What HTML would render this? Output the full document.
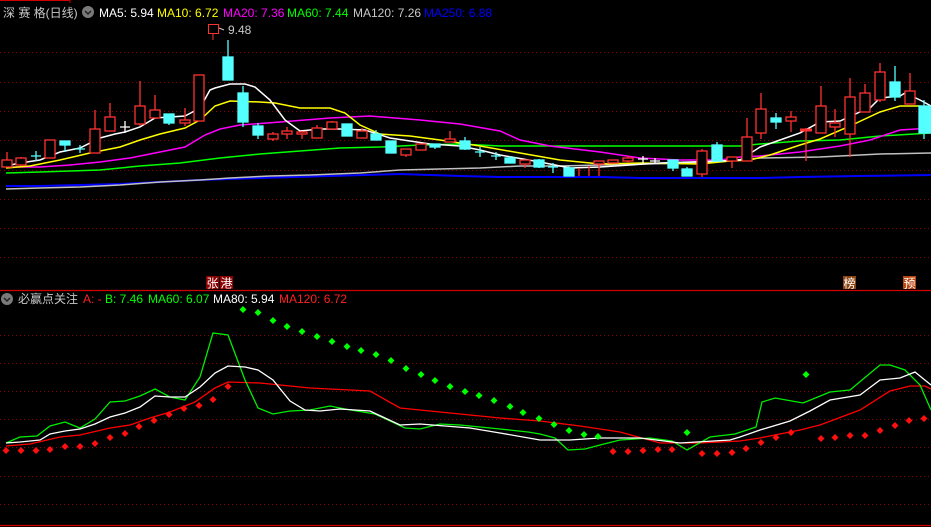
<!DOCTYPE html>
<html><head><meta charset="utf-8"><style>
html,body{margin:0;padding:0;background:#000;width:931px;height:527px;overflow:hidden}
svg{display:block}
text{font-family:"Liberation Sans","Noto Sans CJK SC",sans-serif;font-size:12px}
</style></head><body>
<svg width="931" height="527" viewBox="0 0 931 527" xmlns="http://www.w3.org/2000/svg">
<rect width="931" height="527" fill="#000"/>
<path d="M0 0.5H70V3" stroke="#c00" fill="none"/>
<!-- grids -->
<g stroke="#8b0000" stroke-dasharray="1 3" stroke-width="1">
<path d="M0 52.5H931M0 82.5H931M0 111.5H931M0 140.5H931M0 170.5H931M0 199.5H931M0 228.5H931M0 257.5H931"/>
<path d="M0 335.5H931M0 363.5H931M0 391.5H931M0 419.5H931M0 447.5H931M0 476.5H931M0 504.5H931"/>
</g>
<path d="M0 290.5H931M0 525.5H931" stroke="#d00000" stroke-width="1.2"/>
<!-- header -->
<text x="3" y="17" fill="#c8c8c8" font-size="13">深 赛 格(日线)</text>
<circle cx="88" cy="12" r="6" fill="#7a7a7a"/><path d="M85 11l3 3 3-3" stroke="#222" stroke-width="1.5" fill="none"/>
<text x="99" y="17" fill="#fff">MA5: 5.94</text>
<text x="157" y="17" fill="#ffff00">MA10: 6.72</text>
<text x="223" y="17" fill="#ff00ff">MA20: 7.36</text>
<text x="287" y="17" fill="#00ff00">MA60: 7.44</text>
<text x="353" y="17" fill="#c8c8c8">MA120: 7.26</text>
<text x="424" y="17" fill="#0000ff">MA250: 6.88</text>
<rect x="208.5" y="24.5" width="10" height="9" fill="none" stroke="#ff3232"/>
<path d="M213 34V40" stroke="#ff3232"/>
<path d="M219 28l5 2" stroke="#c8c8c8"/>
<text x="228" y="34" fill="#c8c8c8">9.48</text>
<!-- MA lines upper -->
<g fill="none" stroke-width="1.5">
<polyline stroke="#0000ff" stroke-width="2" points="6,186 40,186 80,185 120,184 160,182 200,180 260,178 330,176 400,174 460,176 500,177 600,177 640,178 700,178 760,178 800,177 860,176 931,175"/>
<polyline stroke="#c0c0c0" points="6,189 40,188 80,187 120,185 160,182 200,180 230,178 270,176 310,175 360,173 400,170 440,169 480,168 520,166 560,166 600,165 640,164 700,163 760,158 820,157 880,154 931,153"/>
<polyline stroke="#00ff00" points="6,173 40,172 70,171 100,170 140,166 180,163 220,158 260,154 300,151 340,148 380,147 420,145 460,144 500,146 580,146 640,146 740,146 760,144 800,141 840,140 880,136 931,133"/>
<polyline stroke="#ff00ff" points="6,167 40,167 70,165 100,162 130,158 160,152 185,147 205,135 220,129 240,125 280,122 330,118 370,116 420,120 460,124 500,131 520,140 550,146 600,152 640,158 680,160 720,160 740,157 760,156 800,152 840,146 870,140 900,130 931,128"/>
<polyline stroke="#ffff00" points="6,168 30,166 60,160 90,153 120,147 140,140 160,134 185,128 200,120 215,106 230,101 260,102 275,103 300,108 330,108 345,113 360,125 380,134 410,136 440,140 480,146 520,153 560,160 600,164 640,163 700,164 730,161 750,160 770,155 800,145 820,139 850,126 880,112 900,106 920,106 931,108"/>
<polyline stroke="#ffffff" points="6,166 20,163 40,160 60,152 80,148 100,138 115,134 125,132 140,127 155,118 185,116 200,108 210,90 215,88 230,84 245,84 255,87 270,100 285,120 300,131 320,129 340,129 365,130 390,138 410,141 430,144 460,146 480,150 500,155 540,162 570,168 600,167 630,165 660,163 690,162 720,161 740,160 760,147 780,140 800,133 820,122 840,121 860,112 870,108 880,98 900,96 905,93 920,100 931,106"/>
</g>
<!-- candles: red hollow -->
<g stroke="#ff3232" stroke-width="1.3" fill="#000">
<path d="M7 152V167M21 157V166M50 140V158M95 110V153M110 103V131M140 81V126M155 95V118M185 108V126M199 75V121M273 132V141M287 127V139M302 131V139M317 125V138M332 121V129M362 128V138M406 149V157M421 144V150M450 131V142M525 160V168M579 168V176M589 166V176M599 161V176M613 160V163M628 156V163M702 149V177M732 157V168M747 118V161M761 93V139M791 111V132M821 86V133M835 109V137M850 78V157M865 84V112M880 63V102M910 73V104M806 128V161"/>
<rect x="2" y="160" width="10" height="7"/><rect x="16" y="158" width="10" height="7"/>
<rect x="45" y="140" width="10" height="18"/><rect x="90" y="129" width="10" height="24"/>
<rect x="105" y="117" width="10" height="14"/><rect x="135" y="106" width="10" height="18"/>
<rect x="150" y="110" width="10" height="8"/><rect x="180" y="120" width="10" height="3"/>
<rect x="194" y="75" width="10" height="46"/><rect x="268" y="134" width="10" height="5"/>
<rect x="282" y="131" width="10" height="3"/><rect x="297" y="132" width="10" height="2"/>
<rect x="312" y="128" width="10" height="10"/><rect x="327" y="122" width="10" height="7"/>
<rect x="357" y="131" width="10" height="7"/><rect x="401" y="149" width="10" height="6"/>
<rect x="416" y="144" width="10" height="6"/><rect x="445" y="139" width="10" height="3"/>
<rect x="520" y="160" width="10" height="4"/><rect x="594" y="161" width="10" height="3"/>
<rect x="608" y="160" width="10" height="3"/><rect x="623" y="158" width="10" height="3"/>
<rect x="697" y="151" width="10" height="23"/><rect x="727" y="157" width="10" height="4"/>
<rect x="742" y="137" width="10" height="24"/><rect x="756" y="109" width="10" height="24"/>
<rect x="786" y="117" width="10" height="4"/><rect x="816" y="106" width="10" height="27"/>
<rect x="830" y="123" width="10" height="4"/><rect x="845" y="97" width="10" height="37"/>
<rect x="860" y="93" width="10" height="19"/><rect x="875" y="72" width="10" height="28"/>
<rect x="905" y="91" width="10" height="13"/>
<path d="M800 130H812" stroke-width="3"/>
</g>
<!-- cyan -->
<g stroke="#54ffff" stroke-width="1.3" fill="#54ffff">
<path d="M65 141V152M169 114V125M228 40V80M243 86V127M258 123V139M347 124V136M376 130V140M391 141V153M435 144V149M465 137V150M510 156V163M539 159V168M569 166V176M673 160V171M687 167V176M717 142V161M776 113V129M895 66V101M924 100V139"/>
<path d="M31 156H41M36 151V161M75 149H85M80 145V153M475 152H485M480 147V157M491 156H501M496 152V160M548 167H558M553 163V173" fill="none"/>
<rect x="60" y="141" width="10" height="4"/><rect x="164" y="114" width="10" height="9"/>
<rect x="223" y="57" width="10" height="23"/><rect x="238" y="93" width="10" height="29"/>
<rect x="253" y="126" width="10" height="9"/><rect x="342" y="124" width="10" height="12"/>
<rect x="371" y="134" width="10" height="6"/><rect x="386" y="141" width="10" height="12"/>
<rect x="430" y="144" width="10" height="3"/><rect x="460" y="141" width="10" height="8"/>
<rect x="505" y="158" width="10" height="5"/><rect x="534" y="160" width="10" height="7"/>
<rect x="564" y="168" width="10" height="8"/><rect x="668" y="160" width="10" height="8"/>
<rect x="682" y="169" width="10" height="7"/><rect x="712" y="145" width="10" height="16"/>
<rect x="771" y="118" width="10" height="4"/><rect x="890" y="82" width="10" height="15"/>
<rect x="919" y="106" width="12" height="27"/>
</g>
<path d="M120 127H130M125 121V133M638 159H648M643 156V163M650 161H660M655 158V164" stroke="#fff" stroke-width="1.3"/>
<!-- markers -->
<rect x="206" y="276" width="13" height="13" fill="#8b0000"/><text x="206.5" y="287.5" fill="#fff" font-size="12">张</text>
<rect x="220" y="276" width="13" height="13" fill="#8b0000"/><text x="220.5" y="287.5" fill="#fff" font-size="12">港</text>
<rect x="843" y="276" width="13" height="13" fill="#8b4513"/><text x="843.5" y="287.5" fill="#fff" font-size="12">榜</text>
<rect x="903" y="276" width="13" height="13" fill="#b8440e"/><text x="903.5" y="287.5" fill="#fff" font-size="12">预</text>
<!-- lower header -->
<circle cx="7" cy="299" r="6" fill="#7a7a7a"/><path d="M4 298l3 3 3-3" stroke="#222" stroke-width="1.5" fill="none"/>
<text x="18" y="303" fill="#c8c8c8">必赢点关注</text>
<text x="83" y="303" fill="#ff2020">A: -</text>
<text x="105" y="303" fill="#00ff00">B: 7.46</text>
<text x="148" y="303" fill="#00ff00">MA60: 6.07</text>
<text x="213" y="303" fill="#fff">MA80: 5.94</text>
<text x="279" y="303" fill="#ff2020">MA120: 6.72</text>
<!-- lower lines -->
<g fill="none" stroke-width="1.3">
<polyline stroke="#ff0000" points="6,446 30,444 60,437 80,435 110,428 130,425 150,418 170,412 195,402 215,388 228,382 260,383 290,386 310,388 330,389 370,391 400,408 430,411 470,415 500,418 540,421 580,426 620,432 660,443 700,443 740,441 760,438 800,430 820,425 860,410 890,391 910,386 925,386 931,389"/>
<polyline stroke="#00ee00" points="6,443 20,437 37,436 50,426 65,422 80,428 95,419 110,402 125,401 140,396 155,389 170,397 185,400 200,377 213,333 228,335 245,380 258,408 273,414 290,411 310,410 330,406 345,409 375,414 405,428 420,429 440,424 460,425 500,429 528,432 540,434 555,438 568,450 585,449 600,445 620,440 650,438 672,441 687,450 710,437 718,436 735,434 756,427 762,402 775,398 803,403 808,401 830,392 850,390 880,365 890,365 905,370 920,385 931,410"/>
<polyline stroke="#ffffff" points="6,443 20,442 40,440 50,434 65,431 80,429 95,424 110,417 125,413 140,407 155,396 170,397 185,397 200,387 215,373 228,366 245,367 258,370 273,380 290,401 305,410 320,411 340,409 370,411 400,425 420,424 470,428 500,433 540,440 570,440 600,438 640,438 680,443 730,440 740,437 760,430 790,421 810,411 830,400 860,395 880,380 900,378 915,372 931,385"/>
</g>
<!-- dots -->
<g fill="#ff1010">
<path d="M6 447l3.5 3.5-3.5 3.5-3.5-3.5zM21 447l3.5 3.5-3.5 3.5-3.5-3.5zM36 447l3.5 3.5-3.5 3.5-3.5-3.5zM50 446l3.5 3.5-3.5 3.5-3.5-3.5zM65 443l3.5 3.5-3.5 3.5-3.5-3.5zM80 443l3.5 3.5-3.5 3.5-3.5-3.5zM95 440l3.5 3.5-3.5 3.5-3.5-3.5zM110 434l3.5 3.5-3.5 3.5-3.5-3.5zM125 430l3.5 3.5-3.5 3.5-3.5-3.5zM139 423l3.5 3.5-3.5 3.5-3.5-3.5zM154 417l3.5 3.5-3.5 3.5-3.5-3.5zM169 411l3.5 3.5-3.5 3.5-3.5-3.5zM184 405l3.5 3.5-3.5 3.5-3.5-3.5zM199 402l3.5 3.5-3.5 3.5-3.5-3.5zM213 396l3.5 3.5-3.5 3.5-3.5-3.5zM228 383l3.5 3.5-3.5 3.5-3.5-3.5z"/>
<path d="M613 448l3.5 3.5-3.5 3.5-3.5-3.5zM628 448l3.5 3.5-3.5 3.5-3.5-3.5zM643 447l3.5 3.5-3.5 3.5-3.5-3.5zM658 446l3.5 3.5-3.5 3.5-3.5-3.5zM672 446l3.5 3.5-3.5 3.5-3.5-3.5zM702 450l3.5 3.5-3.5 3.5-3.5-3.5zM717 450l3.5 3.5-3.5 3.5-3.5-3.5zM732 449l3.5 3.5-3.5 3.5-3.5-3.5zM746 445l3.5 3.5-3.5 3.5-3.5-3.5zM761 439l3.5 3.5-3.5 3.5-3.5-3.5zM776 434l3.5 3.5-3.5 3.5-3.5-3.5zM791 429l3.5 3.5-3.5 3.5-3.5-3.5zM821 435l3.5 3.5-3.5 3.5-3.5-3.5zM835 434l3.5 3.5-3.5 3.5-3.5-3.5zM850 432l3.5 3.5-3.5 3.5-3.5-3.5zM865 432l3.5 3.5-3.5 3.5-3.5-3.5zM880 427l3.5 3.5-3.5 3.5-3.5-3.5zM895 422l3.5 3.5-3.5 3.5-3.5-3.5zM909 417l3.5 3.5-3.5 3.5-3.5-3.5zM924 415l3.5 3.5-3.5 3.5-3.5-3.5z"/>
</g>
<g fill="#00ff00">
<path d="M243 306l3.5 3.5-3.5 3.5-3.5-3.5zM258 309l3.5 3.5-3.5 3.5-3.5-3.5zM273 317l3.5 3.5-3.5 3.5-3.5-3.5zM287 323l3.5 3.5-3.5 3.5-3.5-3.5zM302 328l3.5 3.5-3.5 3.5-3.5-3.5zM317 333l3.5 3.5-3.5 3.5-3.5-3.5zM332 338l3.5 3.5-3.5 3.5-3.5-3.5zM347 343l3.5 3.5-3.5 3.5-3.5-3.5zM361 347l3.5 3.5-3.5 3.5-3.5-3.5zM376 351l3.5 3.5-3.5 3.5-3.5-3.5zM391 357l3.5 3.5-3.5 3.5-3.5-3.5zM406 365l3.5 3.5-3.5 3.5-3.5-3.5zM421 371l3.5 3.5-3.5 3.5-3.5-3.5zM435 377l3.5 3.5-3.5 3.5-3.5-3.5zM450 383l3.5 3.5-3.5 3.5-3.5-3.5zM465 388l3.5 3.5-3.5 3.5-3.5-3.5zM479 392l3.5 3.5-3.5 3.5-3.5-3.5zM494 397l3.5 3.5-3.5 3.5-3.5-3.5zM510 403l3.5 3.5-3.5 3.5-3.5-3.5zM523 409l3.5 3.5-3.5 3.5-3.5-3.5zM539 415l3.5 3.5-3.5 3.5-3.5-3.5zM554 421l3.5 3.5-3.5 3.5-3.5-3.5zM569 427l3.5 3.5-3.5 3.5-3.5-3.5zM584 431l3.5 3.5-3.5 3.5-3.5-3.5zM598 433l3.5 3.5-3.5 3.5-3.5-3.5zM687 429l3.5 3.5-3.5 3.5-3.5-3.5zM806 371l3.5 3.5-3.5 3.5-3.5-3.5z"/>
</g>
</svg>
</body></html>
